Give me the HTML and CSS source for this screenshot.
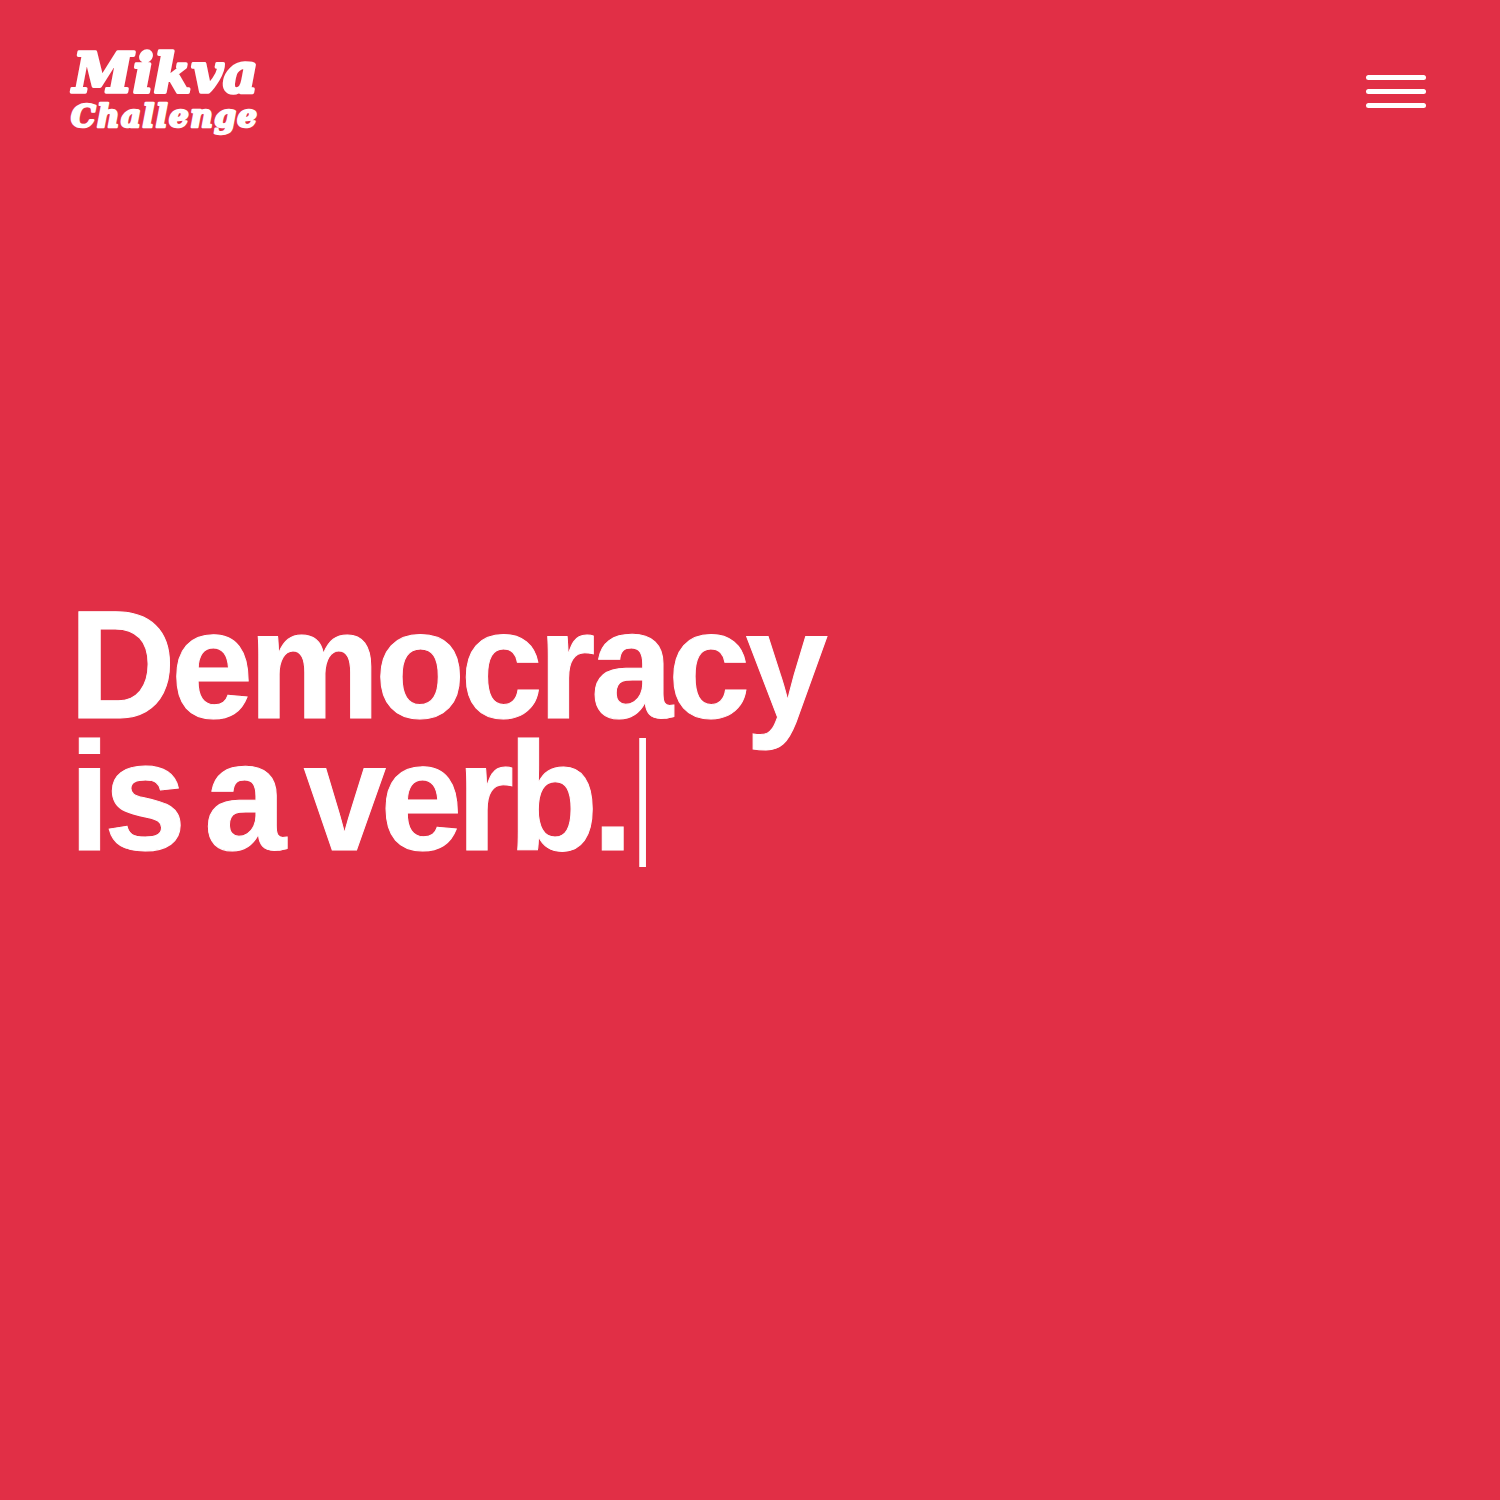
FILE: index.html
```html
<!DOCTYPE html>
<html lang="en">
<head>
    <meta charset="UTF-8">
    <meta name="viewport" content="width=device-width, initial-scale=1.0">
    <title>Mikva Challenge</title>
    <link rel="stylesheet" href="styles.css">
</head>
<body>
    <header class="site-header">
        <a class="logo" href="#">
            <svg class="logo-mark" width="192" height="96" viewBox="0 0 192 96">
                <text class="logo-top" x="5" y="48" textLength="185">Mikva</text>
                <text class="logo-bottom" x="3" y="83" textLength="186">Challenge</text>
            </svg>
        </a>
        <button class="menu-toggle" aria-label="Menu">
            <span class="menu-bar"></span>
            <span class="menu-bar"></span>
            <span class="menu-bar"></span>
        </button>
    </header>
    <main class="hero">
        <h1 class="hero-title">Democracy<br><span class="hero-verb">is a verb.<span class="caret"></span></span></h1>
    </main>
</body>
</html>
```

FILE: styles.css
```css
body {
    background-color: #e12f46;
    color: #ffffff;
    margin: 0;
    height: 1500px;
    overflow: hidden;
}
.site-header {
    display: flex;
    justify-content: space-between;
    align-items: flex-start;
    padding: 44px 74px 0 68px;
}
.logo {
    display: block;
    height: 96px;
}
.logo-mark {
    overflow: visible;
}
.logo-mark text {
    fill: #ffffff;
    stroke: #ffffff;
    stroke-linejoin: round;
    font-family: "DejaVu Serif", serif;
    font-weight: bold;
    font-style: italic;
}
.logo-top {
    font-size: 54px;
    stroke-width: 3.5px;
}
.logo-bottom {
    font-size: 31px;
    stroke-width: 2.5px;
}
.menu-toggle {
    display: flex;
    flex-direction: column;
    gap: 9px;
    margin-top: 31px;
    padding: 0;
    background: none;
    border: none;
    cursor: pointer;
}
.menu-bar {
    display: block;
    width: 60px;
    height: 5px;
    border-radius: 3px;
    background-color: #ffffff;
}
.hero {
    padding: 459px 0 0 69px;
}
.hero-title {
    margin: 0;
    font-family: "Liberation Sans", Arial, sans-serif;
    font-weight: bold;
    font-size: 154px;
    line-height: 132px;
    letter-spacing: -5px;
    -webkit-text-stroke: 1px #ffffff;
    transform: scaleX(0.96);
    transform-origin: left top;
}
.hero-verb {
    letter-spacing: -6.2px;
    word-spacing: -12px;
}
.caret {
    display: inline-block;
    width: 7.3px;
    height: 129px;
    margin-left: 12px;
    vertical-align: -17px;
    background-color: #ffffff;
}
```
